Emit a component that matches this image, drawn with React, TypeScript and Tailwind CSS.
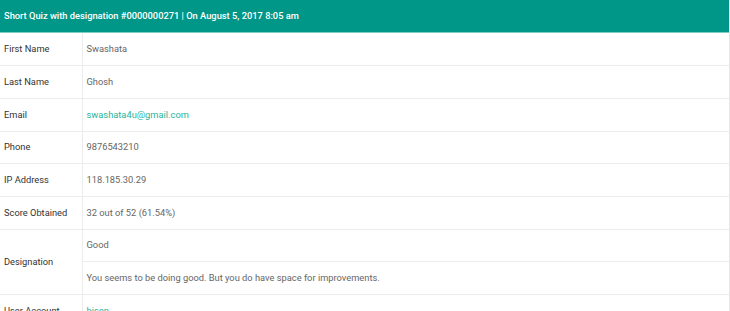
const rows: { label: string; value: string; link?: boolean }[] = [
  { label: "First Name", value: "Swashata" },
  { label: "Last Name", value: "Ghosh" },
  { label: "Email", value: "swashata4u@gmail.com", link: true },
  { label: "Phone", value: "9876543210" },
  { label: "IP Address", value: "118.185.30.29" },
  { label: "Score Obtained", value: "32 out of 52 (61.54%)" },
];

export default function App() {
  return (
    <div className="h-[311px] w-[730px] overflow-hidden bg-white font-['Roboto',sans-serif] text-[9.3px]">
      <div className="border-r border-[#e6e6e6]">
        <div className="flex h-[33px] items-center border-b border-[#80cbc4] bg-[#009688] px-[4px] font-medium text-white">
          Short Quiz with designation #0000000271 | On August 5, 2017 8:05 am
        </div>
        <table className="w-full border-collapse">
          <tbody>
            {rows.map((r) => (
              <tr key={r.label} className="h-[32.7px] border-b border-[#ececec]">
                <td className="w-[82px] border-r border-[#ececec] px-[4px] text-[#333]">{r.label}</td>
                <td className={`px-[4px] ${r.link ? "text-[#1fb59c]" : "text-[#666]"}`}>{r.value}</td>
              </tr>
            ))}
            <tr className="h-[32.5px] border-b border-[#ececec]">
              <td rowSpan={2} className="w-[82px] border-r border-[#ececec] px-[4px] text-[#333]">
                Designation
              </td>
              <td className="px-[4px] text-[#666]">Good</td>
            </tr>
            <tr className="h-[32.5px] border-b border-[#ececec]">
              <td className="px-[4px] text-[#666]">
                You seems to be doing good. But you do have space for improvements.
              </td>
            </tr>
            <tr className="h-[32.7px] border-b border-[#ececec]">
              <td className="w-[82px] border-r border-[#ececec] px-[4px] text-[#333]">User Account</td>
              <td className="px-[4px] text-[#1fb59c]">bisen</td>
            </tr>
          </tbody>
        </table>
      </div>
    </div>
  );
}
